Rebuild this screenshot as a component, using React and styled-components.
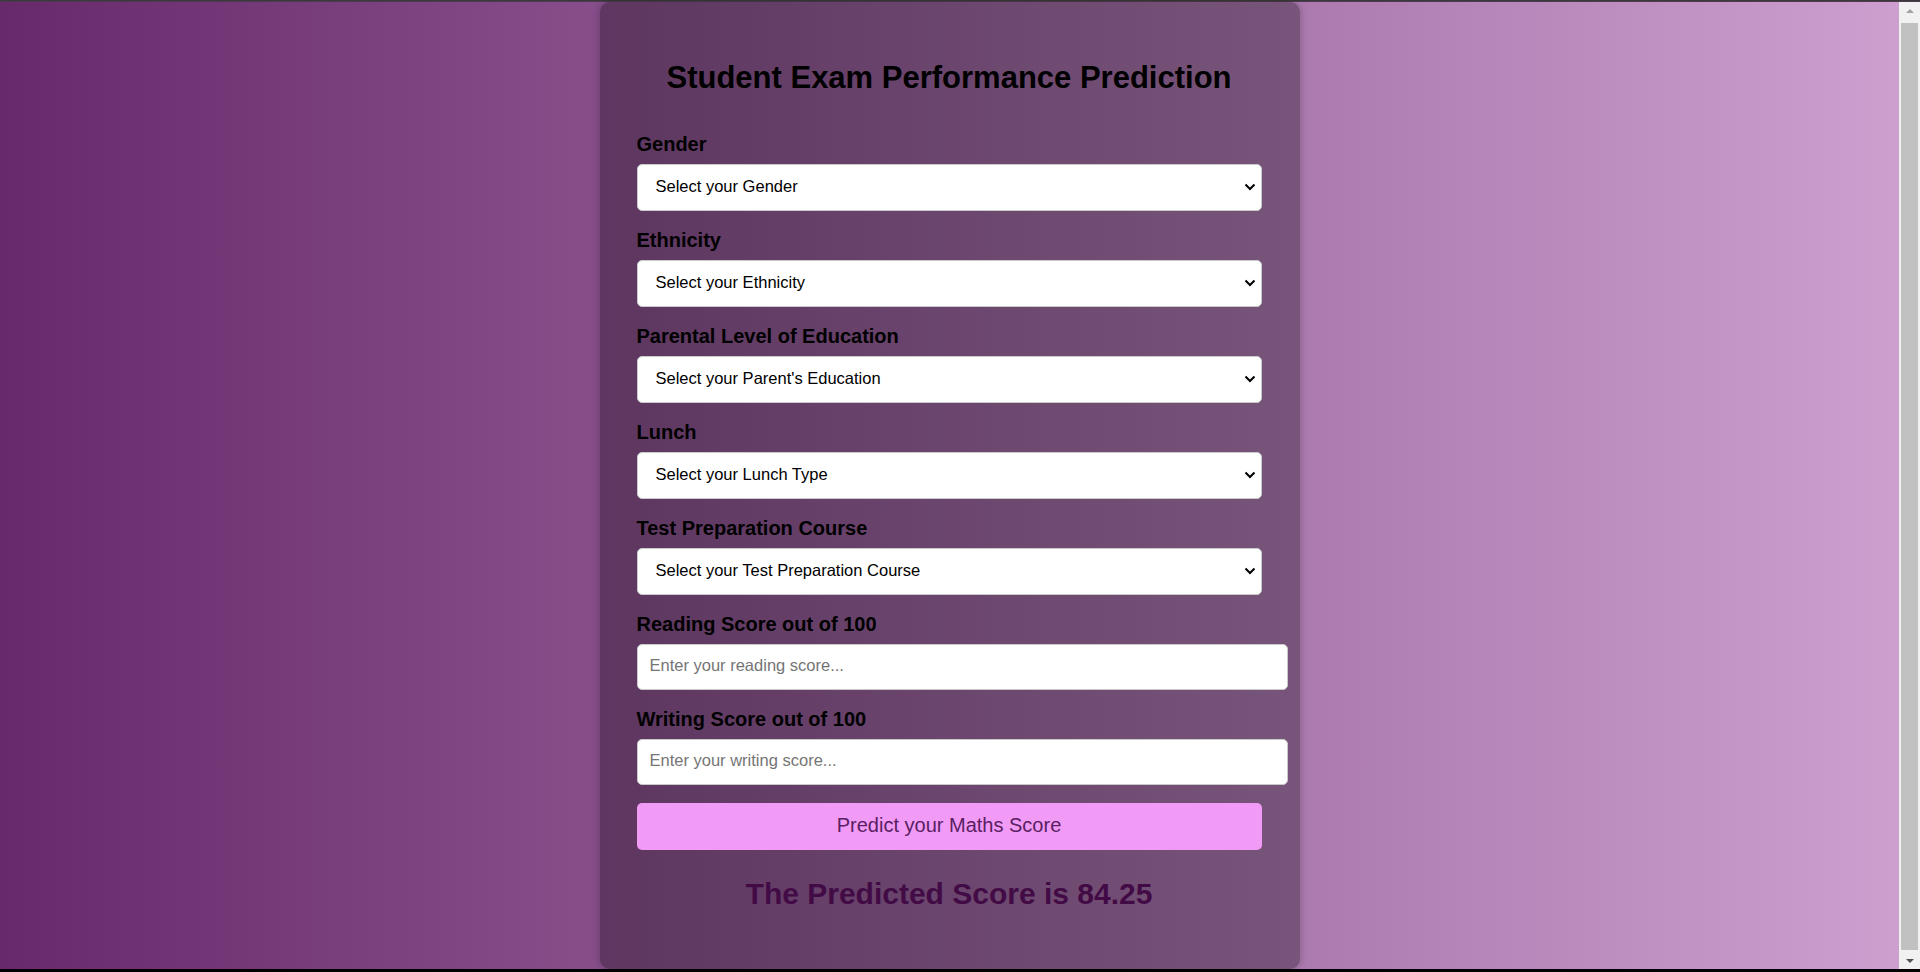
import React from 'react'
import styled, { createGlobalStyle } from 'styled-components'

const GlobalStyle = createGlobalStyle`
    html, body {
        margin: 0;
        padding: 0;
        height: 100%;
        overflow: hidden;
    }
    body {
        font-family: "Liberation Sans", Arial, sans-serif;
    }
`

const Frame = styled.div`
    height: 972px;
    display: flex;
    flex-direction: column;
`

const TopEdge = styled.div`
    height: 2px;
    flex-shrink: 0;
    background: linear-gradient(#3a3a3a 0 1px, #4d3a50 1px);
`

const BottomEdge = styled.div`
    height: 3px;
    flex-shrink: 0;
    background: #000;
`

const Row = styled.div`
    flex: 1;
    display: flex;
    min-height: 0;
`

const Page = styled.main`
    flex: 1;
    display: flex;
    justify-content: center;
    background: linear-gradient(to right, #67296b, #cc9fcf);
`

const Card = styled.div`
    width: 700px;
    box-sizing: border-box;
    padding: 57.5px 38px 0 37px;
    background: rgba(0, 0, 0, 0.3);
    border-radius: 10px;
    box-shadow: 0 0 8px rgba(0, 0, 0, 0.25);
`

const Title = styled.h1`
    margin: 0 0 37px;
    font-size: 31px;
    line-height: 36px;
    font-weight: bold;
    text-align: center;
    color: #000;
`

const Field = styled.div`
    margin-bottom: 18px;
`

const Label = styled.label`
    display: block;
    margin-bottom: 8px;
    font-size: 20px;
    line-height: 23px;
    font-weight: bold;
    color: #000;
`

const SelectWrap = styled.div`
    position: relative;
    height: 47px;
`

const Select = styled.select`
    appearance: none;
    width: 100%;
    height: 47px;
    box-sizing: border-box;
    padding: 0 30px 2px 18px;
    border: 1px solid #c9c9c9;
    border-radius: 5px;
    background: #fff;
    font-family: inherit;
    font-size: 16.5px;
    color: #000;
    outline: none;
`

const Chevron = styled.svg`
    position: absolute;
    right: 6px;
    top: 50%;
    transform: translateY(-50%);
    pointer-events: none;
`

const Input = styled.input`
    display: block;
    width: 100%;
    height: 42px;
    padding: 0 12px 2px;
    box-sizing: content-box;
    border: 1px solid #c9c9c9;
    border-radius: 5px;
    background: #fff;
    font-family: inherit;
    font-size: 16.5px;
    color: #000;
    outline: none;

    &::placeholder {
        color: #757575;
    }
`

const Button = styled.button`
    display: block;
    width: 100%;
    height: 47px;
    margin-top: 1px;
    padding: 0 0 1px;
    border: none;
    border-radius: 5px;
    background: #f19bf6;
    color: #5a2063;
    font-family: inherit;
    font-size: 20px;
    cursor: pointer;
`

const Result = styled.h2`
    margin: 26px 0 0;
    font-size: 30px;
    line-height: 35px;
    font-weight: bold;
    text-align: center;
    color: #420b46;
`

const ScrollTrack = styled.div`
    width: 21px;
    flex-shrink: 0;
    display: flex;
    flex-direction: column;
    align-items: center;
    background: #f1f1f1;
`

const ArrowBox = styled.div`
    height: 17px;
    width: 100%;
    display: flex;
    align-items: center;
    justify-content: center;
`

const Triangle = styled.div`
    width: 0;
    height: 0;
    border-left: 4px solid transparent;
    border-right: 4px solid transparent;
    ${props => props.down
        ? `border-top: 4px solid ${props.color};`
        : `border-bottom: 4px solid ${props.color};`}
`

const Thumb = styled.div`
    flex: 1;
    width: 17px;
    margin: 4px 0 2px;
    background: #c1c1c1;
`

const selects = [
    { label: "Gender", placeholder: "Select your Gender" },
    { label: "Ethnicity", placeholder: "Select your Ethnicity" },
    { label: "Parental Level of Education", placeholder: "Select your Parent's Education" },
    { label: "Lunch", placeholder: "Select your Lunch Type" },
    { label: "Test Preparation Course", placeholder: "Select your Test Preparation Course" },
]

const inputs = [
    { label: "Reading Score out of 100", placeholder: "Enter your reading score..." },
    { label: "Writing Score out of 100", placeholder: "Enter your writing score..." },
]

function App() {
    return (
        <Frame>
            <GlobalStyle />
            <TopEdge />
            <Row>
                <Page>
                    <Card>
                        <Title>Student Exam Performance Prediction</Title>
                        {selects.map(s => (
                            <Field key={s.label}>
                                <Label>{s.label}</Label>
                                <SelectWrap>
                                    <Select defaultValue="">
                                        <option value="" disabled>{s.placeholder}</option>
                                    </Select>
                                    <Chevron width="12" height="8" viewBox="0 0 12 8">
                                        <polyline points="1.5,1.5 6,6 10.5,1.5" fill="none" stroke="#000" strokeWidth="2" />
                                    </Chevron>
                                </SelectWrap>
                            </Field>
                        ))}
                        {inputs.map(i => (
                            <Field key={i.label}>
                                <Label>{i.label}</Label>
                                <Input type="number" placeholder={i.placeholder} />
                            </Field>
                        ))}
                        <Button>Predict your Maths Score</Button>
                        <Result>The Predicted Score is 84.25</Result>
                    </Card>
                </Page>
                <ScrollTrack>
                    <ArrowBox><Triangle color="#a3a3a3" /></ArrowBox>
                    <Thumb />
                    <ArrowBox><Triangle down color="#505050" /></ArrowBox>
                </ScrollTrack>
            </Row>
            <BottomEdge />
        </Frame>
    )
}

export default App
